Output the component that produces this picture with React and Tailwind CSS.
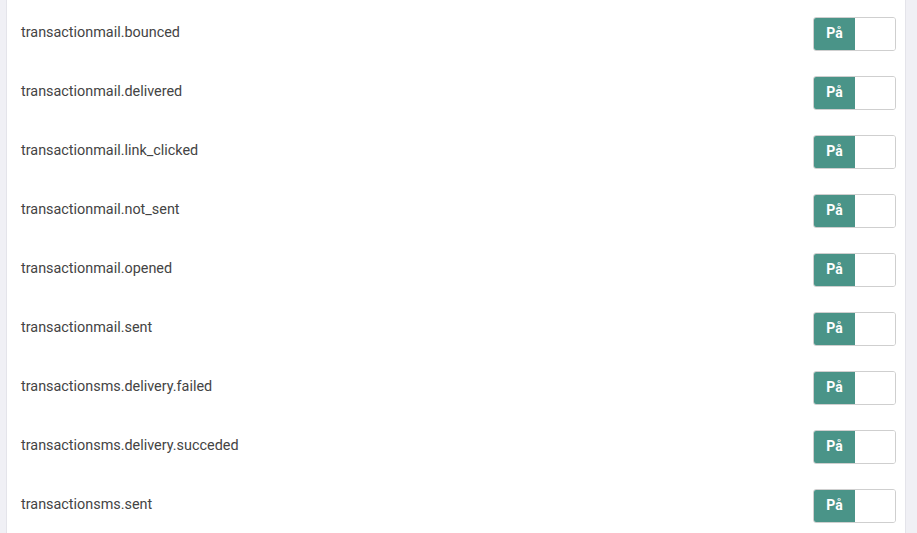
import React from "react";

const items = [
  "transactionmail.bounced",
  "transactionmail.delivered",
  "transactionmail.link_clicked",
  "transactionmail.not_sent",
  "transactionmail.opened",
  "transactionmail.sent",
  "transactionsms.delivery.failed",
  "transactionsms.delivery.succeded",
  "transactionsms.sent",
];

export default function App() {
  return (
    <div className="flex h-[533px] w-[917px] overflow-hidden bg-[#f0f0f5]" style={{ fontFamily: "Roboto, sans-serif" }}>
      <div className="w-[7px] shrink-0 border-r border-[#e4e4ea]" />
      <div className="flex w-[899px] shrink-0 flex-col bg-white pt-[4px] border-r border-[#e4e4ea]">
        {items.map((t) => (
          <div key={t} className="flex h-[59px] shrink-0 items-center justify-between pl-[14px] pr-[9px]">
            <span className="-mt-[2px] text-[14.4px] text-[#444]">{t}</span>
            <div className="flex h-[34px] w-[83px] overflow-hidden rounded-[3px] border border-[#cfcfcf]">
              <div className="flex w-[41px] items-center justify-center bg-[#4a9488] text-[14px] font-bold text-white">På</div>
              <div className="flex-1 bg-white" />
            </div>
          </div>
        ))}
      </div>
    </div>
  );
}
